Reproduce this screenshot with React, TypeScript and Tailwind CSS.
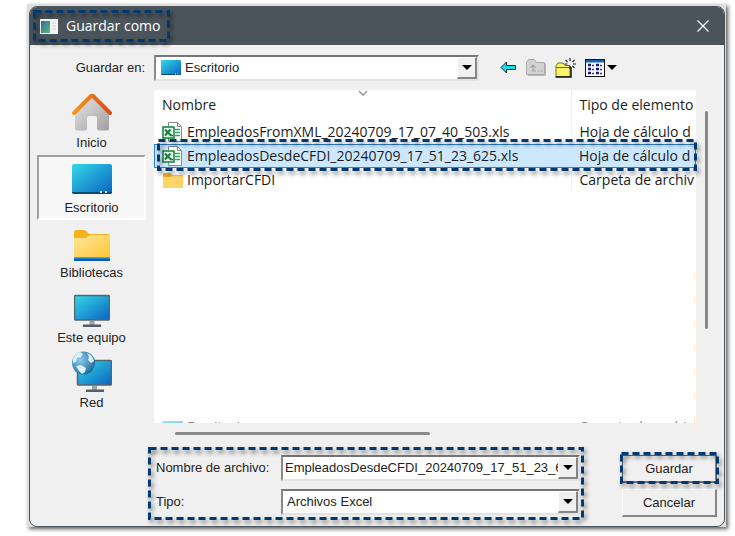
import React from 'react';
import clsx from 'clsx';

/* ---------- Icons ---------- */

const HomeIcon = () => (
  <svg width="40" height="40" viewBox="0 0 40 40">
    <defs>
      <linearGradient id="homeWall" x1="0" y1="0" x2="1" y2="1">
        <stop offset="0" stopColor="#e6e6e6" />
        <stop offset="1" stopColor="#a0a0a0" />
      </linearGradient>
      <linearGradient id="homeRoof" x1="0" y1="0" x2="1" y2="0">
        <stop offset="0" stopColor="#f59a23" />
        <stop offset="1" stopColor="#dd4a14" />
      </linearGradient>
    </defs>
    <path d="M3 20 20 4l17 16v15a2.500 2.500 0 0 1-2.500 2.500H27a2 2 0 0 1-2-2V25a2 2 0 0 0-2-2h-6a2 2 0 0 0-2 2v10.500a2 2 0 0 1-2 2H5.500A2.500 2.500 0 0 1 3 35z" fill="url(#homeWall)" />
    <path d="M2 20 18.500 3.500q1.500-1.500 3 0L38 20" fill="none" stroke="url(#homeRoof)" strokeWidth="4" strokeLinecap="round" />
  </svg>
);

const DesktopIcon = ({ className }: { className?: string }) => (
  <svg viewBox="0 0 40 30" preserveAspectRatio="none" className={className}>
    <defs>
      <linearGradient id="deskScreen" x1="0" y1="0" x2="1" y2="1">
        <stop offset="0" stopColor="#35d8e6" />
        <stop offset="1" stopColor="#0a63c2" />
      </linearGradient>
    </defs>
    <rect width="40" height="30" rx="2" fill="url(#deskScreen)" />
    <path d="M0 28h40a2 2 0 0 1-2 2H2a2 2 0 0 1-2-2z" fill="#0b4a78" />
    <path d="M28 27h2v2h-2zM33 27h2v2h-2z" fill="#d5f1ff" />
  </svg>
);

const LibraryIcon = () => (
  <svg width="36" height="34" viewBox="0 0 36 34">
    <defs>
      <linearGradient id="libFront" x1="0" y1="0" x2="1" y2="1">
        <stop offset="0" stopColor="#ffe6a0" />
        <stop offset="1" stopColor="#fcc633" />
      </linearGradient>
    </defs>
    <path d="M0 3a2 2 0 0 1 2-2h9l4 4h19a2 2 0 0 1 2 2v9H0z" fill="#f5b21c" />
    <path d="M0 9h12l4-3h20v23H0z" fill="url(#libFront)" />
    <path d="M0 29h36v3H0z" fill="#0a5cb8" />
    <path d="M0 28h36v1.500H0z" fill="#35a8e8" />
  </svg>
);

const ComputerIcon = () => (
  <svg width="36" height="34" viewBox="0 0 36 34">
    <rect x="0.500" y="1.500" width="35" height="24.500" rx="1" fill="url(#deskScreen)" stroke="#59636c" strokeWidth="1.500" />
    <path d="M15.500 27h5v4h-5z" fill="#9aa3aa" />
    <path d="M9 30.500h18V33H9z" fill="#555e66" />
  </svg>
);

const NetworkIcon = () => (
  <svg width="40" height="42" viewBox="0 0 40 42">
    <defs>
      <radialGradient id="globe" cx="0.350" cy="0.350" r="0.700">
        <stop offset="0" stopColor="#8ccdee" />
        <stop offset="1" stopColor="#1c6c9f" />
      </radialGradient>
    </defs>
    <rect x="5.500" y="9.500" width="34" height="24.500" rx="1" fill="url(#deskScreen)" stroke="#59636c" strokeWidth="1.500" />
    <path d="M20 35h5v4h-5z" fill="#9aa3aa" />
    <path d="M14 38.500h18V41H14z" fill="#555e66" />
    <circle cx="11.500" cy="12" r="11.500" fill="url(#globe)" />
    <path d="M1 8q2-5 7-7l3 2-2 3-4 1-1 4-3 1zM4 15l5-1 5 3-1 4-3 2-3-3zM15 2l5 3 2 5-3 2-3-3 1-3z" fill="#dcf1f8" />
  </svg>
);

const ExcelIcon = () => (
  <svg width="21" height="20" viewBox="0 0 21 20">
    <path d="M6.500.5h9l4 4v15h-13z" fill="#fff" stroke="#888" />
    <path d="M15.500.5v4h4" fill="none" stroke="#888" />
    <path d="M13 7.500h5M13 10.500h5M13 13.500h5" stroke="#2fa866" strokeWidth="1.500" />
    <rect x="1" y="5" width="11" height="11" fill="#e8f5ec" stroke="#15803f" strokeWidth="1.500" />
    <path d="M3 7.500 9 13.500M8.500 7.500 3 13.500" stroke="#15803f" strokeWidth="2" />
    <path d="M8 13.500h3" stroke="#15803f" strokeWidth="1.500" />
  </svg>
);

const FolderIcon = () => (
  <svg width="20" height="17" viewBox="0 0 20 17">
    <path d="M0 2a1 1 0 0 1 1-1h6l2 2h10a1 1 0 0 1 1 1v6H0z" fill="#eeb02a" />
    <path d="M0 5h7l2-1.500h11V15a1 1 0 0 1-1 1H1a1 1 0 0 1-1-1z" fill="#fdd467" />
  </svg>
);

const AppIcon = () => (
  <svg width="18" height="15" viewBox="0 0 18 15">
    <defs>
      <linearGradient id="appPane" x1="0" y1="0" x2="1" y2="1">
        <stop offset="0" stopColor="#2f6f9f" />
        <stop offset="1" stopColor="#5cb878" />
      </linearGradient>
    </defs>
    <rect width="18" height="15" fill="#f4f6f6" />
    <rect x="1" y="2" width="9" height="12" fill="url(#appPane)" />
    <path d="M12 4h4M12 7h4M12 10h4" stroke="#c9d0d0" />
  </svg>
);

const BackIcon = () => (
  <svg width="17" height="13" viewBox="0 0 17 13">
    <path d="M1 6.500 6.500 1v3.500H15.500v4H6.500V12z" fill="#14e0ea" stroke="#0b2b3a" />
  </svg>
);

const FolderUpIcon = () => (
  <svg width="20" height="18" viewBox="0 0 20 18">
    <path d="M.5 15.500v-12l2-3h6l2 3h8v12z" fill="#d2d2d2" stroke="#ababab" />
    <path d="M19.500 4.500v12H2" fill="none" stroke="#b4b4b4" />
    <path d="M4.500 8.500 7 6l2.500 2.500M7 6.500V12h3M12 12h1.500M15 12h1.500" fill="none" stroke="#a3a3a3" strokeWidth="1.200" />
  </svg>
);

const NewFolderIcon = () => (
  <svg width="21" height="20" viewBox="0 0 21 20">
    <path d="M1 18.500v-11L3 5h5l2 2.500h5v11z" fill="#fbf36a" stroke="#77720c" />
    <path d="M1 9.500h14" stroke="#77720c" />
    <path d="M.5 19h15.500V9" fill="none" stroke="#111" strokeWidth="1.500" />
    <path d="M15 0v3M10.500 2l2 2M19.500 2l-2 2M9.500 6h3M18 6h3M17.500 8l2 2M15 8v3" stroke="#222" strokeWidth="1.200" />
  </svg>
);

const ViewIcon = () => (
  <svg width="20" height="18" viewBox="0 0 20 18">
    <rect x=".5" y=".5" width="19" height="17" fill="#fff" stroke="#111" />
    <path d="M1 1h18v2.500H1z" fill="#1467b8" />
    <path d="M3 6h3M3 10h3M3 14h3M11 6h3M11 10h3M11 14h3" stroke="#1a1a8c" strokeWidth="2.500" />
    <path d="M7 6.500h2M7 10.500h2M7 14.500h2M15 6.500h2M15 10.500h2M15 14.500h2" stroke="#33337a" strokeWidth="1.500" />
  </svg>
);

const Caret = () => (
  <svg width="10" height="5" viewBox="0 0 10 5">
    <path d="M0 0h10L5 5z" fill="#000" />
  </svg>
);

/* Dashed marker around the control it sits in */
const Highlight = ({ className }: { className: string }) => (
  <svg className={clsx('absolute pointer-events-none overflow-visible drop-shadow-[2px_3px_2px_rgba(0,0,0,0.5)]', className)}>
    <rect x="0.5" y="0.5" width="100%" height="100%" fill="none" stroke="#003a70" strokeWidth="3" strokeDasharray="7 4" />
  </svg>
);

/* ---------- Controls ---------- */

const sunken = 'border-2 border-t-[#767676] border-l-[#8a8a8a] border-r-[#e3e3e3] border-b-[#e3e3e3] bg-white';
const raised = 'bg-[#f0f0f0] border-t border-l border-r-2 border-b-2 border-t-white border-l-white border-r-[#858585] border-b-[#858585]';

interface SelectBoxProps {
  id: string;
  value: string;
  icon?: React.ReactNode;
}

const SelectBox: React.FC<SelectBoxProps> = ({ id, value, icon }) => (
  <div className={clsx('relative flex h-[26px] min-w-0 items-center', sunken)}>
    {icon}
    <select id={id} className="h-full w-full appearance-none bg-transparent px-1 outline-none">
      <option>{value}</option>
    </select>
    <span className={clsx('absolute inset-y-0 right-0 flex w-5 items-center justify-center pointer-events-none', raised)}>
      <Caret />
    </span>
  </div>
);

const places = [
  { name: 'Inicio', icon: <HomeIcon /> },
  { name: 'Escritorio', icon: <DesktopIcon className="h-[30px] w-10" />, active: true },
  { name: 'Bibliotecas', icon: <LibraryIcon /> },
  { name: 'Este equipo', icon: <ComputerIcon /> },
  { name: 'Red', icon: <NetworkIcon /> },
];

const files = [
  { name: 'EmpleadosFromXML_20240709_17_07_40_503.xls', type: 'Hoja de cálculo d', icon: <ExcelIcon /> },
  { name: 'EmpleadosDesdeCFDI_20240709_17_51_23_625.xls', type: 'Hoja de cálculo d', icon: <ExcelIcon />, selected: true },
  { name: 'ImportarCFDI', type: 'Carpeta de archiv', icon: <FolderIcon /> },
];

const FileList = () => (
  <div className="relative h-[333px] min-w-0 flex-1">
    <div className="h-full overflow-hidden bg-white">
      <table className="w-full table-fixed border-collapse font-['Open_Sans','Noto_Sans',sans-serif] text-[14px] leading-5 text-[#1c1c1c]">
        <colgroup>
          <col />
          <col className="w-[125px]" />
        </colgroup>
        <thead>
          <tr className="h-[30px] text-left">
            <th className="relative pl-2 font-normal">
              Nombre
              <svg className="absolute left-[204px] top-0" width="10" height="6" viewBox="0 0 10 6">
                <path d="M1 1l4 4 4-4" fill="none" stroke="#999" strokeWidth="1.500" />
              </svg>
            </th>
            <th className="overflow-hidden whitespace-nowrap border-l border-[#eeeeee] pl-2 font-normal">Tipo de elemento</th>
          </tr>
        </thead>
        <tbody>
          {files.map((file) => (
            <tr key={file.name} className={clsx('h-6', file.selected && 'bg-[#cce8ff] outline outline-1 -outline-offset-1 outline-[#2f83c8]')}>
              <td className="overflow-hidden p-0">
                <div className="flex items-center gap-1 whitespace-nowrap pl-2">
                  <span className="flex w-[21px] shrink-0 justify-center">{file.icon}</span>
                  {file.name}
                </div>
              </td>
              <td className={clsx('overflow-hidden whitespace-nowrap p-0 pl-2', !file.selected && 'border-l border-[#edf5fb]')}>{file.type}</td>
            </tr>
          ))}
          <tr className="h-[223px]">
            <td colSpan={2} />
          </tr>
          <tr className="h-6 text-[#888]">
            <td className="p-0">
              <div className="flex items-center gap-1 pl-2">
                <DesktopIcon className="h-3 w-[21px] opacity-50" />
                Escritorio
              </div>
            </td>
            <td className="overflow-hidden whitespace-nowrap p-0 pl-2">Carpeta de archiv</td>
          </tr>
        </tbody>
      </table>
    </div>
    <div className="absolute bottom-0 right-px flex flex-col gap-[19px]">
      {[0, 1, 2, 3, 4, 5, 6].map((n) => (
        <span key={n} className="h-[5px] w-px bg-[#fbe9b0]" />
      ))}
    </div>
    <Highlight className="left-1 top-[50px] h-[29px] w-[calc(100%-5px)]" />
  </div>
);

export default function App() {
  return (
    <div className="min-h-[536px] bg-white pl-[27px] pr-[9px] pt-1">
      <div className="bg-[#dedede] pl-0.5 pr-px pt-0.5 shadow-[2px_2px_4px_rgba(0,0,0,0.65)]">
        <main className="overflow-hidden rounded-lg border border-[#4b545a] bg-[#f0f0f0] font-['Liberation_Sans',sans-serif] text-[13px] leading-5 text-[#222]">
          <header className="flex h-[38px] items-center justify-between bg-[#4b545a] pl-[3px] pr-[15px] text-white">
            <div className="relative flex h-8 w-[137px] items-center gap-2 pl-[7px]">
              <AppIcon />
              <h1 className="whitespace-nowrap font-['Open_Sans','Noto_Sans',sans-serif] text-[14px]">Guardar como</h1>
              <Highlight className="left-px top-px h-[29px] w-[134px]" />
            </div>
            <button type="button" aria-label="Cerrar">
              <svg width="12" height="12" viewBox="0 0 12 12">
                <path d="M.5.5l11 11M11.500.5l-11 11" stroke="#fff" strokeWidth="1.200" />
              </svg>
            </button>
          </header>

          {/* Location bar */}
          <div className="flex h-[45px] items-center">
            <label htmlFor="location" className="w-[124px] shrink-0 pr-[9px] text-right">Guardar en:</label>
            <div className="w-[325px]">
              <SelectBox id="location" value="Escritorio" icon={<DesktopIcon className="ml-[5px] h-[15px] w-5 shrink-0" />} />
            </div>
            <div className="ml-[21px] flex items-center gap-[9px]">
              <button type="button" aria-label="Atrás"><BackIcon /></button>
              <button type="button" aria-label="Subir un nivel"><FolderUpIcon /></button>
              <button type="button" aria-label="Nueva carpeta"><NewFolderIcon /></button>
              <button type="button" aria-label="Vistas" className="flex items-center gap-0.5">
                <ViewIcon />
                <Caret />
              </button>
            </div>
          </div>

          <div className="flex">
            <nav className="mr-2 w-[116px] shrink-0 pl-[7px]">
              {places.map((place) => (
                <a
                  key={place.name}
                  href="#"
                  className={clsx(
                    'flex h-[65px] flex-col items-center justify-end border-2',
                    place.active ? 'border-t-[#a0a0a0] border-l-[#a0a0a0] border-r-white border-b-white bg-[#f7f7f7]' : 'border-transparent',
                  )}
                >
                  <span className={clsx('flex items-end', place.active && 'pb-1')}>{place.icon}</span>
                  {place.name}
                </a>
              ))}
            </nav>
            <FileList />
            <div className="w-7 shrink-0 pl-[9px] pt-[21px]">
              <div className="h-[218px] w-[3px] rounded bg-[#8a8a8a]" />
            </div>
          </div>

          <div className="flex h-6 items-start pl-[145px] pt-[9px]">
            <div className="h-[3px] w-[255px] rounded bg-[#8a8a8a]" />
          </div>

          <form className="flex gap-[38px] pb-1.5 pl-[118px] pr-[7px]" onSubmit={(e) => e.preventDefault()}>
            <div className="relative grid h-[73px] min-w-0 flex-1 grid-cols-[125px_1fr] content-start items-center gap-y-2 pl-2 pr-1 pt-2">
              <label htmlFor="filename">Nombre de archivo:</label>
              <div className={clsx('flex h-[26px] min-w-0', sunken)}>
                <input
                  id="filename"
                  className="w-full min-w-0 bg-transparent pl-0.5 outline-none"
                  defaultValue="EmpleadosDesdeCFDI_20240709_17_51_23_625.xls"
                />
                <button type="button" aria-label="Nombres recientes" className={clsx('flex w-5 shrink-0 items-center justify-center', raised)}>
                  <Caret />
                </button>
              </div>
              <label htmlFor="filetype">Tipo:</label>
              <SelectBox id="filetype" value="Archivos Excel" />
              <Highlight className="left-px top-px h-[70px] w-[calc(100%-3px)]" />
            </div>
            <div className="flex w-[95px] flex-col gap-1.5 pt-2">
              <div className="relative">
                <button type="submit" className={clsx('h-7 w-full outline outline-1 -outline-offset-1 outline-[#666]', raised)}>Guardar</button>
                <Highlight className="-left-px -top-[2px] h-[29px] w-[calc(100%+1px)]" />
              </div>
              <button type="button" className={clsx('h-7 w-full', raised)}>Cancelar</button>
            </div>
          </form>
        </main>
      </div>
    </div>
  );
}
